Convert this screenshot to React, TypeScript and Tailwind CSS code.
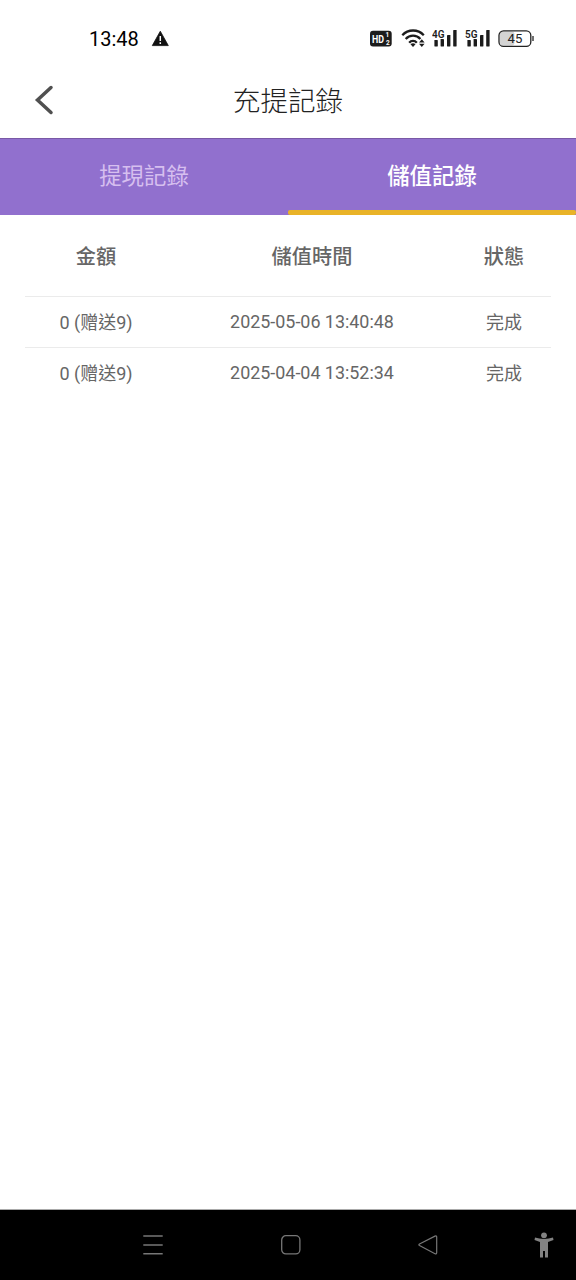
import clsx from "clsx";
import React, { useState } from "react";

type IRecord = {
  amount: string;
  time: string;
  status: string;
};

const tabs = ["提現記錄", "儲值記錄"];

const records: IRecord[] = [
  { amount: "0 (赠送9)", time: "2025-05-06 13:40:48", status: "完成" },
  { amount: "0 (赠送9)", time: "2025-04-04 13:52:34", status: "完成" },
];

function Signal({ label }: { label: string }) {
  return (
    <svg width="26" height="20" viewBox="0 0 26 20" fill="#1c1c1c">
      <text
        x="0"
        y="9.8"
        fontSize="11"
        fontWeight="600"
        textLength="12.5"
        lengthAdjust="spacingAndGlyphs"
      >
        {label}
      </text>
      <rect x="2.4" y="12" width="3.4" height="6.5" rx="0.4" />
      <rect x="8.6" y="11" width="3.4" height="7.5" rx="0.4" />
      <rect x="15" y="7" width="3.4" height="11.5" rx="0.4" />
      <rect x="21.2" y="2" width="3.4" height="16.5" rx="0.4" />
    </svg>
  );
}

function StatusBar() {
  return (
    <div className="flex h-[62px] items-start pl-[89px] pt-[28px] font-['Roboto',sans-serif]">
      <span className="w-[62px] text-[20px] leading-[22px] text-black">13:48</span>
      <svg className="mt-[2px]" width="18" height="17" viewBox="0 0 18 17">
        <path d="M9.3 1.2 17.3 15.6H1.3Z" fill="#111" stroke="#111" strokeWidth="0.8" strokeLinejoin="round" />
        <path d="M9.3 6v5M9.3 12.2v1.8" stroke="#fff" strokeWidth="1.5" />
      </svg>
      <svg className="ml-[201px] mt-[2px]" width="22" height="17" viewBox="0 0 22 17">
        <rect y="0.8" width="21.7" height="15.8" rx="3" fill="#1c1c1c" />
        <text x="2" y="13" fontSize="11.8" fontWeight="700" fill="#fff" textLength="12" lengthAdjust="spacingAndGlyphs">
          HD
        </text>
        <text x="15.6" y="7.2" fontSize="6.5" fontWeight="700" fill="#fff">1</text>
        <text x="16" y="15.4" fontSize="6.5" fontWeight="700" fill="#fff">2</text>
      </svg>
      <svg className="ml-[9px]" width="26" height="20" viewBox="0 0 26 20" fill="none" stroke="#1c1c1c" strokeWidth="2.3">
        <path d="M1.3 7.2C7.2.9 16.9.9 22.8 7.2" />
        <path d="M4.7 11c4-4.5 10.7-4.5 14.7 0" />
        <path d="M8.2 14.7c2-2.4 5.6-2.4 7.6 0" />
        <path d="M9.5 16.3c1.5-1.3 3.6-1.3 5 0L12 18.9Z" fill="#1c1c1c" stroke="none" />
        <path d="m20.8 11.2 2.8 3.2H18ZM20.8 19l2.8-3.2H18Z" fill="#1c1c1c" stroke="none" />
      </svg>
      <div className="ml-[5px] flex gap-[7px]">
        <Signal label="4G" />
        <Signal label="5G" />
      </div>
      <svg className="ml-[7px] mt-[1px]" width="36" height="19" viewBox="0 0 36 19">
        <rect x="2" y="2.6" width="14.5" height="14" rx="3" fill="#d4d4d4" />
        <rect x="1" y="1.8" width="31.8" height="15.6" rx="4.5" fill="none" stroke="#222" strokeWidth="1.3" />
        <path d="M35 7v5" stroke="#222" strokeWidth="1.3" />
        <text x="9.5" y="14.3" fontSize="13" fill="#222" textLength="14.8" lengthAdjust="spacingAndGlyphs">45</text>
      </svg>
    </div>
  );
}

function NavBar() {
  return (
    <div className="flex h-[71px] shrink-0 items-center border-t border-[#aaa] bg-black pl-[142px]">
      <svg width="22" height="22" viewBox="0 0 22 22" stroke="#777" strokeWidth="1.4">
        <path d="M1.3 2h19.4M1.3 11h19.4M1.3 19.7h19.4" />
      </svg>
      <svg className="ml-[116px]" width="22" height="22" viewBox="0 0 22 22" fill="none" stroke="#777" strokeWidth="1.3">
        <rect x="1.7" y="1.7" width="18.2" height="18.2" rx="4.2" />
      </svg>
      <svg className="ml-[116px]" width="22" height="22" viewBox="0 0 22 22" fill="none" stroke="#777" strokeWidth="1.2">
        <path d="M1.5 10Q.3 10.8 1.5 11.6L17 19.7Q18.7 20.3 18.7 18.6V3Q18.7 1.3 17 2.1Z" />
      </svg>
      <svg className="ml-[93px]" width="22" height="28" viewBox="0 0 22 28" fill="#828282">
        <circle cx="11" cy="4.3" r="2.9" />
        <path d="M2 6.6 1.5 9.1 7 10.9V26.6h3V20h2v6.6h3V10.9l5.5-1.8-.5-2.5C14.5 8.5 7.5 8.5 2 6.6Z" />
      </svg>
    </div>
  );
}

function App() {
  const [active, setActive] = useState(1);

  return (
    <div className="flex h-[1280px] w-[576px] flex-col bg-white font-['Roboto','Noto_Sans_CJK_TC',sans-serif]">
      <StatusBar />
      <header className="grid h-[76px] grid-cols-[88px_1fr_88px] items-center">
        <button className="pl-[34px]">
          <svg width="20" height="30" viewBox="0 0 20 30" fill="none" stroke="#505050" strokeWidth="3.5">
            <path d="M17 2.5 3.5 15 17 27.5" strokeLinecap="round" />
          </svg>
        </button>
        <h1 className="pt-[4px] text-center text-[27.6px] font-light text-[#222]">充提記錄</h1>
      </header>

      <div className="grid h-[77px] grid-cols-2 border-t border-[#7959a6] bg-[#9170ce]">
        {tabs.map((tab, index) => (
          <button
            key={tab}
            className={clsx(
              "flex flex-col text-[22.4px]",
              active === index ? "font-medium text-white" : "text-[#d6bfef]"
            )}
            onClick={() => setActive(index)}
          >
            <span className="flex flex-1 items-center self-center pt-[5px]">{tab}</span>
            <span
              className={clsx(
                "h-[5px] w-full rounded-[2px]",
                active === index && "bg-[#e9b328]"
              )}
            />
          </button>
        ))}
      </div>

      <main className="flex-1 px-[25px]">
        <table className="w-full table-fixed text-center text-[18px] text-[#666]">
          <colgroup>
            <col className="w-[142px]" />
            <col className="w-[290px]" />
            <col className="w-[94px]" />
          </colgroup>
          <thead>
            <tr className="h-[81px] text-[20.2px]">
              <th className="pt-[4px] font-medium">金額</th>
              <th className="pt-[4px] font-medium">儲值時間</th>
              <th className="pt-[4px] font-medium">狀態</th>
            </tr>
          </thead>
          <tbody>
            {records.map((e, index) => (
              <tr key={index} className="h-[51px] border-t border-[#ebebeb]">
                <td className="pt-[1px]">{e.amount}</td>
                <td className="pt-[2px] text-[17.9px]">{e.time}</td>
                <td className="pt-[2px]">{e.status}</td>
              </tr>
            ))}
          </tbody>
        </table>
      </main>
      <NavBar />
    </div>
  );
}

export default App;
